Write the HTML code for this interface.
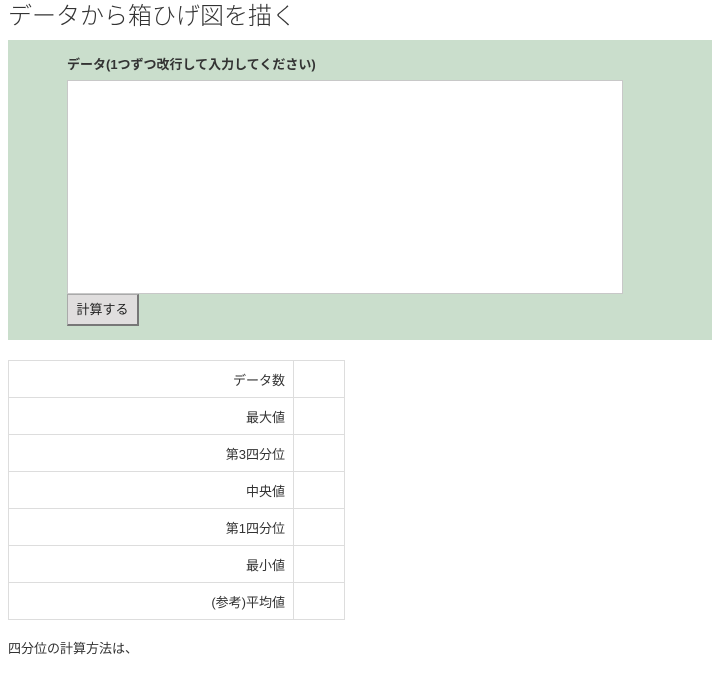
<!DOCTYPE html>
<html><head><meta charset="utf-8"><style>
body{margin:0;background:#fff;font-family:"Liberation Sans","Noto Sans CJK JP",sans-serif;color:#333;width:719px;height:673px;overflow:hidden;position:relative}
h1{position:absolute;left:8px;top:1px;margin:0;font-size:24px;font-weight:300;color:#333;line-height:32px}
.box{position:absolute;left:8px;top:40px;width:704px;height:300px;background:#cadecc}
.lbl{position:absolute;left:59px;top:14px;font-size:13px;font-weight:bold;color:#333}
.ta{position:absolute;left:59px;top:40px;width:554px;height:212px;background:#fff;border:1px solid #c8c8c8}
.btn{position:absolute;left:59px;top:254px;width:72px;height:32px;background:#e0dede;border:1px solid #aaa;border-right:2px solid #777;border-bottom:2px solid #777;box-sizing:border-box;font-size:13px;line-height:30px;text-align:center;color:#222}
table{position:absolute;left:8px;top:360px;border-collapse:collapse;font-size:13px}
td{border:1px solid #ddd;height:36px;padding:0 8px;text-align:right;color:#333}
td.a{width:268px}td.b{width:34px}
p{position:absolute;left:8px;top:638px;margin:0;font-size:13px}
</style></head><body>
<h1>データから箱ひげ図を描く</h1>
<div class="box"><div class="lbl">データ(1つずつ改行して入力してください)</div><div class="ta"></div><div class="btn">計算する</div></div>
<table>
<tr><td class="a">データ数</td><td class="b"></td></tr>
<tr><td class="a">最大値</td><td class="b"></td></tr>
<tr><td class="a">第3四分位</td><td class="b"></td></tr>
<tr><td class="a">中央値</td><td class="b"></td></tr>
<tr><td class="a">第1四分位</td><td class="b"></td></tr>
<tr><td class="a">最小値</td><td class="b"></td></tr>
<tr><td class="a">(参考)平均値</td><td class="b"></td></tr>
</table>
<p>四分位の計算方法は、</p>
</body></html>
